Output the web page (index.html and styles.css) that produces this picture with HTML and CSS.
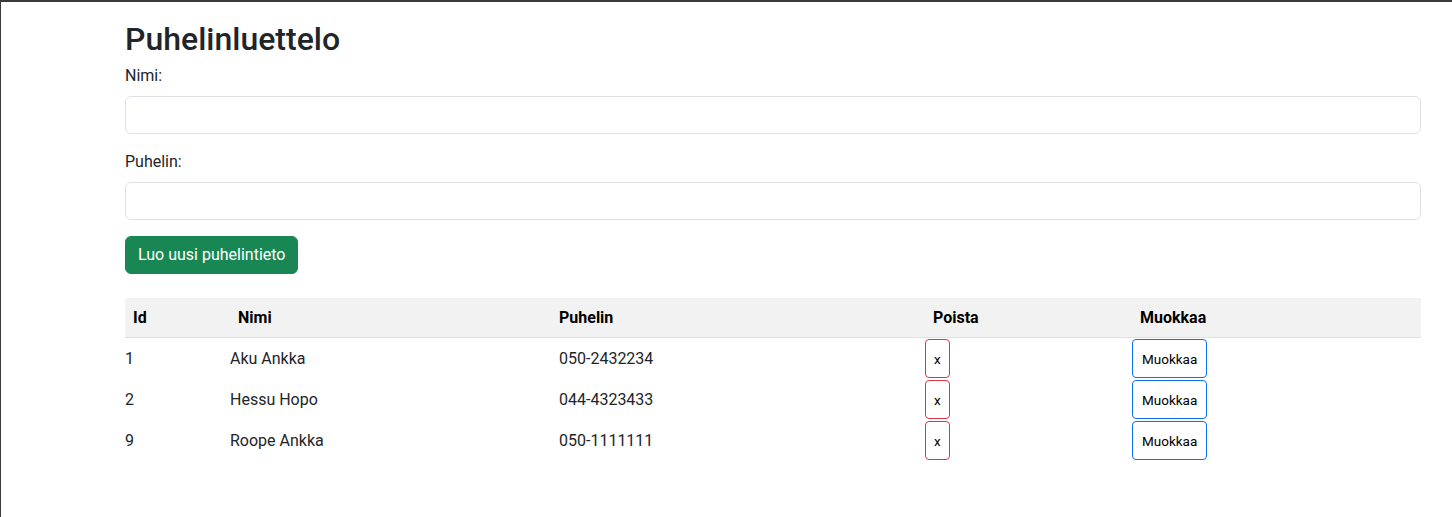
FILE: index.html
```html
<!DOCTYPE html>
<html lang="fi">
<head>
<meta charset="utf-8">
<title>Puhelinluettelo</title>
<link rel="stylesheet" href="styles.css">
</head>
<body>
<div class="frame">
  <main class="container">
    <h2 class="title">Puhelinluettelo</h2>
    <form class="form">
      <div class="field">
        <label class="label" for="nimi">Nimi:</label>
        <input class="input" id="nimi" type="text">
      </div>
      <div class="field">
        <label class="label" for="puhelin">Puhelin:</label>
        <input class="input" id="puhelin" type="text">
      </div>
      <button type="button" class="btn-create">Luo uusi puhelintieto</button>
    </form>
    <table class="table">
      <colgroup>
        <col class="c-id"><col class="c-name"><col class="c-phone"><col class="c-del"><col class="c-edit">
      </colgroup>
      <thead>
        <tr>
          <th>Id</th>
          <th class="th-name">Nimi</th>
          <th class="th-phone">Puhelin</th>
          <th class="th-del">Poista</th>
          <th>Muokkaa</th>
        </tr>
      </thead>
      <tbody>
        <tr>
          <td>1</td><td>Aku Ankka</td><td>050-2432234</td>
          <td><button type="button" class="btn-del">x</button></td>
          <td><button type="button" class="btn-edit">Muokkaa</button></td>
        </tr>
        <tr>
          <td>2</td><td>Hessu Hopo</td><td>044-4323433</td>
          <td><button type="button" class="btn-del">x</button></td>
          <td><button type="button" class="btn-edit">Muokkaa</button></td>
        </tr>
        <tr>
          <td>9</td><td>Roope Ankka</td><td>050-1111111</td>
          <td><button type="button" class="btn-del">x</button></td>
          <td><button type="button" class="btn-edit">Muokkaa</button></td>
        </tr>
      </tbody>
    </table>
  </main>
</div>
</body>
</html>
```

FILE: styles.css
```css
* { box-sizing: border-box; }
html, body { margin: 0; padding: 0; background: #fff; }
body {
  font-family: "Roboto", "Liberation Sans", sans-serif;
  font-size: 16px;
  line-height: 1.5;
  color: #212529;
}
.frame {
  height: 517px;
  border-top: 2px solid #3a3a3a;
  border-left: 1px solid #3a3a3a;
  overflow: hidden;
}
.container {
  margin-left: 124px;
  width: 1296px;
  padding-top: 18px;
}
.title {
  margin: 0 0 5.6px;
  font-size: 32px;
  font-weight: 500;
  line-height: 1.2;
}
.form { display: flex; flex-direction: column; align-items: flex-start; }
.field { width: 100%; margin-bottom: 16px; }
.label { display: block; margin-bottom: 8px; }
.input {
  display: block;
  width: 100%;
  height: 38px;
  border: 1px solid #dee2e6;
  border-radius: 6px;
  font: inherit;
  padding: 6px 12px;
}
.btn-create {
  height: 38px;
  padding: 6px 12px;
  background: #198754;
  color: #fff;
  border: 1px solid #198754;
  border-radius: 6px;
  font: inherit;
  margin-bottom: 24px;
}
.table {
  width: 100%;
  border-collapse: collapse;
  table-layout: fixed;
}
.c-id { width: 105px; }
.c-name { width: 329px; }
.c-phone { width: 366px; }
.c-del { width: 207px; }
.table thead tr { background: #f2f2f2; border-bottom: 1px solid #dee2e6; }
.table th {
  text-align: left;
  color: #000;
  font-weight: 700;
  height: 40px;
  padding: 0 8px;
}
.table .th-phone { padding-left: 0; }
.table td {
  padding: 1px 0;
  height: 41px;
  vertical-align: middle;
}
.btn-del, .btn-edit {
  font-family: inherit;
  font-size: 13.5px;
  line-height: 20px;
  height: 39px;
  padding: 0 8px;
  background: #fff;
  color: #000;
  border-radius: 4px;
  cursor: pointer;
}
.btn-del { border: 1px solid #dc3545; }
.btn-edit { border: 1px solid #0d6efd; padding: 0 9px; }
```
